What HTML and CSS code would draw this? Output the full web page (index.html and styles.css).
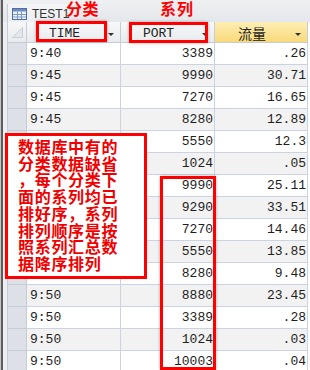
FILE: index.html
```html
<!DOCTYPE html>
<html>
<head>
<meta charset="utf-8">
<link rel="stylesheet" href="styles.css">
</head>
<body>
<div class="app">
  <div class="edge"></div>
  <div class="main">
    <div class="titlebar">
      <div class="tab">
        <svg class="ticon" width="15" height="12" viewBox="0 0 15 12">
          <rect x="0.5" y="0.5" width="14" height="11" fill="#eef3fb" stroke="#4f6fa3"/>
          <rect x="1" y="1" width="13" height="2.5" fill="#6d8cc0"/>
          <path d="M1 6.5H14M1 9H14M5.5 3.5V11M9.5 3.5V11" stroke="#7f9ac6" stroke-width="1"/>
        </svg>
        <span class="tname">TEST1</span>
      </div>
    </div>
    <div class="sheet">
      <div class="sel corner"><svg width="11" height="11" viewBox="0 0 11 11"><path d="M0.5 10.5L10.5 0.5V10.5Z" fill="#e4e7eb" stroke="#c9ced6"/></svg></div>
      <div class="hc"><span class="ht">TIME</span><i class="arrow"></i></div>
      <div class="hc"><span class="ht">PORT</span><i class="arrow"></i></div>
      <div class="hc yellow"><span class="ht cjk">流量</span><i class="arrow"></i></div>

      <div class="sel"></div><div class="c">9:40</div><div class="c r">3389</div><div class="c r">.26</div>
      <div class="sel"></div><div class="c alt">9:45</div><div class="c r alt">9990</div><div class="c r alt">30.71</div>
      <div class="sel"></div><div class="c">9:45</div><div class="c r">7270</div><div class="c r">16.65</div>
      <div class="sel"></div><div class="c alt">9:45</div><div class="c r alt">8280</div><div class="c r alt">12.89</div>
      <div class="sel"></div><div class="c">9:45</div><div class="c r">5550</div><div class="c r">12.3</div>
      <div class="sel"></div><div class="c alt">9:45</div><div class="c r alt">1024</div><div class="c r alt">.05</div>
      <div class="sel"></div><div class="c">9:50</div><div class="c r">9990</div><div class="c r">25.11</div>
      <div class="sel"></div><div class="c alt">9:50</div><div class="c r alt">9290</div><div class="c r alt">33.51</div>
      <div class="sel"></div><div class="c">9:50</div><div class="c r">7270</div><div class="c r">14.46</div>
      <div class="sel"></div><div class="c alt">9:50</div><div class="c r alt">5550</div><div class="c r alt">13.85</div>
      <div class="sel"></div><div class="c">9:50</div><div class="c r">8280</div><div class="c r">9.48</div>
      <div class="sel"></div><div class="c alt">9:50</div><div class="c r alt">8880</div><div class="c r alt">23.45</div>
      <div class="sel"></div><div class="c">9:50</div><div class="c r">3389</div><div class="c r">.28</div>
      <div class="sel"></div><div class="c alt">9:50</div><div class="c r alt">1024</div><div class="c r alt">.03</div>
      <div class="sel"></div><div class="c">9:50</div><div class="c r">10003</div><div class="c r">.04</div>
    </div>
  </div>

  <div class="label label-cat">分类</div>
  <div class="label label-ser">系列</div>
  <div class="mark mark-time"></div>
  <div class="mark mark-port"></div>
  <div class="mark mark-col"></div>
  <div class="note">数据库中有的<br>分类数据缺省<br>，每个分类下<br>面的系列均已<br>排好序，系列<br>排列顺序是按<br>照系列汇总数<br>据降序排列</div>
</div>
</body>
</html>
```
FILE: styles.css
```css
* { box-sizing: border-box; }
html, body { margin: 0; padding: 0; }
body { width: 310px; height: 370px; overflow: hidden; background: #ffffff; }

.app {
  position: relative;
  display: flex;
  width: 310px;
  height: 370px;
  overflow: hidden;
}

.edge {
  width: 3px;
  flex: none;
  background: linear-gradient(to right, #c4c4c4 0, #c4c4c4 1px, #5d5d5d 1px, #5d5d5d 3px);
}

.main {
  flex: 1;
  display: flex;
  flex-direction: column;
  background: #eceef1;
}

.titlebar {
  height: 22px;
  flex: none;
  padding-left: 4px;
  padding-top: 4px;
  background: linear-gradient(#eef0f2, #e4e7eb);
  display: flex;
}

.tab {
  display: flex;
  align-items: center;
  gap: 5px;
  padding: 0 0 0 4px;
  height: 18px;
  border-left: 1px solid #c7ccd3;
  background: linear-gradient(#f4f5f7, #eceef1);
}

.ticon { display: block; margin-top: 2px; }

.tname {
  font-family: "Liberation Sans", Arial, sans-serif;
  font-size: 12px;
  line-height: 14px;
  color: #333333;
  padding-top: 2px;
}

.sheet {
  margin-left: 4px;
  display: grid;
  grid-template-columns: 20px 94px 94px 93px;
  grid-template-rows: 21px;
  grid-auto-rows: 22px;
  background: #ffffff;
}

.sel {
  background: #dde1e7;
  border-left: 1px solid #c5ccd6;
  border-right: 1px solid #c5ccd6;
  border-bottom: 1px solid #c5ccd6;
}

.corner {
  background: linear-gradient(#f6f7f8, #e8eaed);
  display: flex;
  align-items: flex-end;
  justify-content: flex-end;
  padding: 0 3px 4px 0;
}
.corner svg { display: block; }

.hc {
  display: flex;
  align-items: flex-start;
  padding-top: 3px;
  border-right: 1px solid #c5ccd6;
  border-bottom: 1px solid #c5ccd6;
  background: linear-gradient(#f7f8f9, #e9ebee);
  font-family: "Liberation Mono", "Courier New", monospace;
  font-size: 13px;
  line-height: 17px;
  color: #222;
}
.hc.yellow {
  background: linear-gradient(#fdeeb4, #f9da7a);
}
.ht {
  flex: 1;
  text-align: center;
}
.ht.cjk {
  font-family: "Noto Sans CJK SC", sans-serif;
  font-size: 14px;
  line-height: 16px;
}
.arrow {
  width: 0;
  height: 0;
  margin: 8px 6px 0 6px;
  border-left: 3px solid transparent;
  border-right: 3px solid transparent;
  border-top: 3px solid #333;
}

.c {
  font-family: "Liberation Mono", "Courier New", monospace;
  font-size: 13px;
  line-height: 21px;
  color: #1e1e1e;
  padding: 0 1px 0 3px;
  border-right: 1px solid #c9d3e2;
  border-bottom: 1px solid #c9d3e2;
  background: #ffffff;
  white-space: nowrap;
}
.c.r { text-align: right; }
.c.alt { background: #f2f2f2; }

.label {
  position: absolute;
  top: 0;
  font-family: "Noto Sans CJK SC", sans-serif;
  font-weight: 700;
  font-size: 16px;
  line-height: 16px;
  color: #ff0000;
  letter-spacing: 0.5px;
}
.label-cat { left: 66px; }
.label-ser { left: 160px; letter-spacing: 1px; }

.mark {
  position: absolute;
  border: 3px solid #ff0000;
  box-shadow: 0 0 3px rgba(0, 0, 0, 0.3);
}
.mark-time { left: 36px; top: 21px; width: 71px; height: 21px; }
.mark-port { left: 129px; top: 22px; width: 79px; height: 21px; }
.mark-col { left: 160px; top: 176px; width: 56px; height: 194px; }

.note {
  position: absolute;
  left: 5px;
  top: 133px;
  width: 142px;
  height: 146px;
  border: 3px solid #ff0000;
  background: #ffffff;
  padding: 2px 0 0 10px;
  font-family: "Noto Sans CJK SC", sans-serif;
  font-weight: 700;
  font-size: 16px;
  line-height: 16.7px;
  letter-spacing: 0.7px;
  color: #f00000;
  white-space: nowrap;
}
```
